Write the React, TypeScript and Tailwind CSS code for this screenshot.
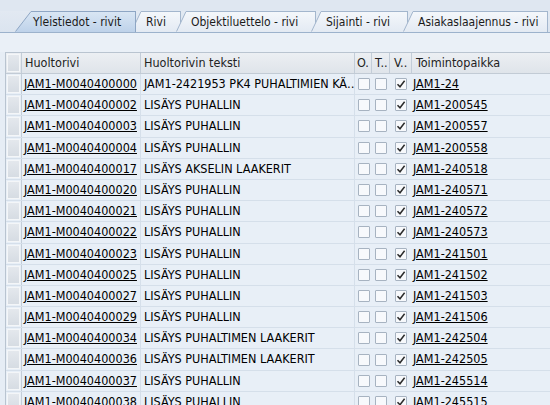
import React from 'react';

const FONT = { fontFamily: '"DejaVu Sans Condensed", "DejaVu Sans", sans-serif' };

type Row = { id: string; text: string; place: string };

const rows: Row[] = [
  { id: 'JAM1-M0040400000', text: 'JAM1-2421953 PK4 PUHALTIMIEN KÄ…', place: 'JAM1-24' },
  { id: 'JAM1-M0040400002', text: 'LISÄYS PUHALLIN', place: 'JAM1-200545' },
  { id: 'JAM1-M0040400003', text: 'LISÄYS PUHALLIN', place: 'JAM1-200557' },
  { id: 'JAM1-M0040400004', text: 'LISÄYS PUHALLIN', place: 'JAM1-200558' },
  { id: 'JAM1-M0040400017', text: 'LISÄYS AKSELIN LAAKERIT', place: 'JAM1-240518' },
  { id: 'JAM1-M0040400020', text: 'LISÄYS PUHALLIN', place: 'JAM1-240571' },
  { id: 'JAM1-M0040400021', text: 'LISÄYS PUHALLIN', place: 'JAM1-240572' },
  { id: 'JAM1-M0040400022', text: 'LISÄYS PUHALLIN', place: 'JAM1-240573' },
  { id: 'JAM1-M0040400023', text: 'LISÄYS PUHALLIN', place: 'JAM1-241501' },
  { id: 'JAM1-M0040400025', text: 'LISÄYS PUHALLIN', place: 'JAM1-241502' },
  { id: 'JAM1-M0040400027', text: 'LISÄYS PUHALLIN', place: 'JAM1-241503' },
  { id: 'JAM1-M0040400029', text: 'LISÄYS PUHALLIN', place: 'JAM1-241506' },
  { id: 'JAM1-M0040400034', text: 'LISÄYS PUHALTIMEN LAAKERIT', place: 'JAM1-242504' },
  { id: 'JAM1-M0040400036', text: 'LISÄYS PUHALTIMEN LAAKERIT', place: 'JAM1-242505' },
  { id: 'JAM1-M0040400037', text: 'LISÄYS PUHALLIN', place: 'JAM1-245514' },
  { id: 'JAM1-M0040400038', text: 'LISÄYS PUHALLIN', place: 'JAM1-245515' },
];

const tabs = [
  { label: 'Yleistiedot - rivit', w: 'w-[103px]' },
  { label: 'Rivi', w: 'w-[38px]' },
  { label: 'Objektiluettelo - rivi', w: 'w-[128px]' },
  { label: 'Sijainti - rivi', w: 'w-[85px]' },
  { label: 'Asiakaslaajennus - rivi', w: 'w-[133px]' },
];

const Tab = ({ label, w, active }: { label: string; w: string; active?: boolean }) => (
  <div className={active ? 'flex h-[21px] relative z-10' : 'flex h-[21px] -ml-[5px]'}>
    <svg width={active ? 18 : 12} height={21} className="block shrink-0">
      <defs>
        <linearGradient id={active ? 'ga' : 'gi'} x1="0" y1="0" x2="0" y2="1">
          <stop offset="0" stopColor={active ? '#d9e6f4' : '#f4f7fb'} />
          <stop offset="1" stopColor={active ? '#bed2ea' : '#e3eaf3'} />
        </linearGradient>
      </defs>
      {active ? (
        <>
          <polygon points="0,21 16,1 18,1 18,21" fill="url(#ga)" />
          <line x1="0.5" y1="20.5" x2="16" y2="0.5" stroke="#8ea6c4" />
          <line x1="16" y1="0.5" x2="18" y2="0.5" stroke="#8ea6c4" />
        </>
      ) : (
        <>
          <polygon points="0,21 10,1 12,1 12,21" fill="url(#gi)" />
          <line x1="0.5" y1="20.5" x2="10" y2="0.5" stroke="#a3b6cd" />
          <line x1="10" y1="0.5" x2="12" y2="0.5" stroke="#a3b6cd" />
        </>
      )}
    </svg>
    <div
      className={
        active
          ? `${w} h-[21px] border-t border-r border-[#8ea6c4] bg-gradient-to-b from-[#d9e6f4] to-[#bed2ea] text-[12px] text-[#1a1a1a] leading-[20px] pl-[0px] whitespace-nowrap`
          : `${w} h-[21px] border-t border-r border-[#a3b6cd] bg-gradient-to-b from-[#f4f7fb] to-[#e3eaf3] text-[12px] text-[#1a1a1a] leading-[20px] pl-[3px] whitespace-nowrap`
      }
    >
      {label}
    </div>
  </div>
);

const Check = ({ on }: { on?: boolean }) => (
  <div className="w-[12px] h-[12px] border border-[#a7b3c1] bg-[#f7f9fc] rounded-[1px] flex items-center justify-center">
    {on && (
      <svg width="10" height="10" viewBox="0 0 10 10">
        <path d="M1.5 5.2 L4 7.8 L8.6 1.8" fill="none" stroke="#2b2b2b" strokeWidth="1.5" />
      </svg>
    )}
  </div>
);

const Selector = () => (
  <div className="w-[16px] shrink-0 h-full p-[1px] border-r border-[#c3cdd8]">
    <div className="w-full h-full bg-gradient-to-b from-[#e4e8ed] to-[#d6dce3] border border-[#f4f6f8]" />
  </div>
);

export default function App() {
  return (
    <div className="w-[550px] h-[405px] overflow-hidden bg-[#e6edf5] text-[12.5px] text-black" style={FONT}>
      <div className="h-[11px] bg-[#dfe7f1]" />
      <div className="flex pl-[15px] h-[21px] bg-gradient-to-b from-[#e2e9f2] to-[#dbe4ef]">
        {tabs.map((t, i) => (
          <Tab key={t.label} label={t.label} w={t.w} active={i === 0} />
        ))}
      </div>
      <div className="h-[1px] bg-[#9cb2cc]" />
      <div className="h-[19px] bg-[#eaf0f7]" />
      <div className="ml-[5px] border-l border-t border-[#b9c4d0] w-[600px]">
        <div className="flex h-[21px] bg-gradient-to-b from-[#eceff3] to-[#dfe4ea] border-b border-[#c2cbd5] text-[#222]">
          <Selector />
          <div className="w-[119px] shrink-0 border-r border-[#c3cdd8] pl-[3px] leading-[20px]">Huoltorivi</div>
          <div className="w-[214px] shrink-0 border-r border-[#c3cdd8] pl-[3px] leading-[20px]">Huoltorivin teksti</div>
          <div className="w-[17px] shrink-0 border-r border-[#c3cdd8] pl-[2px] leading-[20px] overflow-hidden">O.</div>
          <div className="w-[18px] shrink-0 border-r border-[#c3cdd8] pl-[3px] leading-[20px] overflow-hidden whitespace-nowrap">T..</div>
          <div className="w-[22px] shrink-0 border-r border-[#c3cdd8] pl-[4px] leading-[20px] overflow-hidden whitespace-nowrap">V..</div>
          <div className="flex-1 pl-[4px] leading-[20px]">Toimintopaikka</div>
        </div>
        {rows.map((r) => (
          <div key={r.id} className="flex h-[21.2px] bg-[#e8eff7] border-b border-[#d5dfea]">
            <Selector />
            <div className="w-[119px] shrink-0 border-r border-[#d5dfea] pl-[2px] leading-[20px] underline whitespace-nowrap overflow-hidden">{r.id}</div>
            <div className="w-[214px] shrink-0 border-r border-[#d5dfea] pl-[3px] leading-[20px] whitespace-nowrap overflow-hidden">{r.text}</div>
            <div className="w-[17px] shrink-0 flex items-center justify-center"><Check /></div>
            <div className="w-[18px] shrink-0 flex items-center justify-center"><Check /></div>
            <div className="w-[22px] shrink-0 flex items-center justify-center"><Check on /></div>
            <div className="flex-1 pl-[1px] leading-[20px] underline whitespace-nowrap">{r.place}</div>
          </div>
        ))}
      </div>
    </div>
  );
}
